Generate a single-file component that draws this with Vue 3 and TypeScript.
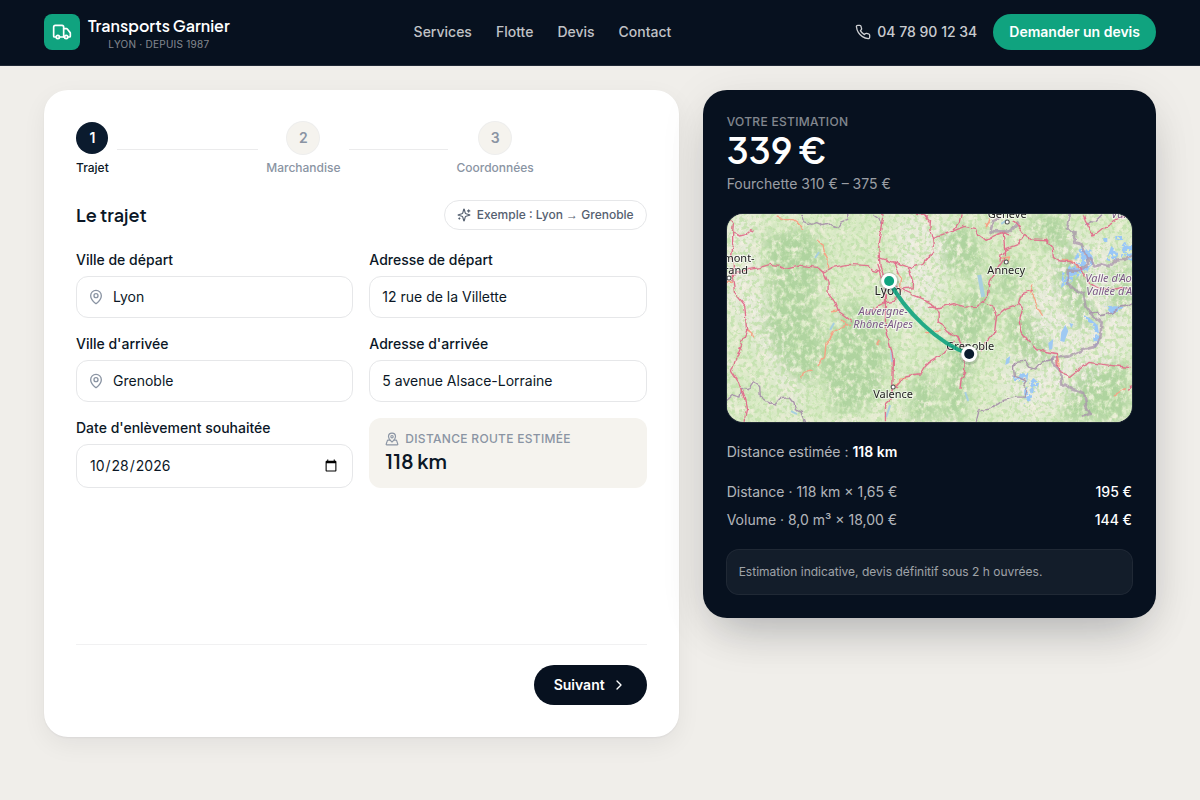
<script setup lang="ts">
import { ref } from 'vue'

interface Step { id: number; label: string }
interface Town { name: string; x: number; y: number; size: number }

const links: string[] = ['Services', 'Flotte', 'Devis', 'Contact']
const steps: Step[] = [
  { id: 1, label: 'Trajet' },
  { id: 2, label: 'Marchandise' },
  { id: 3, label: 'Coordonnées' },
]
const current = ref<number>(1)

const fromCity = ref('Lyon')
const fromAddress = ref('12 rue de la Villette')
const toCity = ref('Grenoble')
const toAddress = ref('5 avenue Alsace-Lorraine')
const pickupDate = ref('2026-10-28')

const lines = [
  { label: 'Distance · 118 km × 1,65 €', amount: '195 €' },
  { label: 'Volume · 8,0 m³ × 18,00 €', amount: '144 €' },
]

const towns: Town[] = [
  { name: 'Lyon', x: 161, y: 81, size: 12 },
  { name: 'Grenoble', x: 243, y: 136, size: 11 },
  { name: 'Annecy', x: 279, y: 60, size: 11 },
  { name: 'Valence', x: 166, y: 184, size: 11 },
  { name: 'Genève', x: 280, y: 4, size: 11 },
  { name: 'mont-', x: 12, y: 48, size: 11 },
  { name: 'rand', x: 9, y: 60, size: 11 },
]

function fillExample(): void {
  fromCity.value = 'Lyon'
  toCity.value = 'Grenoble'
}
function next(): void {
  current.value = Math.min(current.value + 1, steps.length)
}
</script>

<template>
  <div class="page">
    <header class="topbar">
      <div class="wrap topbar-inner">
        <a class="brand" href="#">
          <span class="brand-mark">
            <svg class="icon" width="20" height="20" viewBox="0 0 24 24" aria-hidden="true">
              <path d="M14 18V6a2 2 0 0 0-2-2H4a2 2 0 0 0-2 2v11a1 1 0 0 0 1 1h2" />
              <path d="M15 18H9" />
              <path d="M19 18h2a1 1 0 0 0 1-1v-3.65a1 1 0 0 0-.22-.624l-3.48-4.35A1 1 0 0 0 17.52 8H14" />
              <circle cx="17" cy="18" r="2" />
              <circle cx="7" cy="18" r="2" />
            </svg>
          </span>
          <span class="brand-text">
            <span class="brand-name">Transports Garnier</span>
            <span class="brand-sub">LYON · DEPUIS 1987</span>
          </span>
        </a>
        <nav class="nav">
          <a v-for="link in links" :key="link" href="#">{{ link }}</a>
        </nav>
        <div class="actions">
          <a class="phone" href="tel:+33478901234">
            <svg class="icon" width="16" height="16" viewBox="0 0 24 24" aria-hidden="true">
              <path d="M22 16.92v3a2 2 0 0 1-2.18 2 19.79 19.79 0 0 1-8.63-3.07 19.5 19.5 0 0 1-6-6 19.79 19.79 0 0 1-3.07-8.67A2 2 0 0 1 4.11 2h3a2 2 0 0 1 2 1.72 12.84 12.84 0 0 0 .7 2.81 2 2 0 0 1-.45 2.11L8.09 9.91a16 16 0 0 0 6 6l1.27-1.27a2 2 0 0 1 2.11-.45 12.84 12.84 0 0 0 2.81.7A2 2 0 0 1 22 16.92z" />
            </svg>
            04 78 90 12 34
          </a>
          <button type="button" class="cta">Demander un devis</button>
        </div>
      </div>
    </header>

    <main class="wrap layout">
      <form class="card" @submit.prevent="next">
        <ol class="steps">
          <li v-for="step in steps" :key="step.id" :class="{ active: step.id === current }">
            <div class="step">
              <span class="dot">{{ step.id }}</span>
              <span class="step-label">{{ step.label }}</span>
            </div>
            <span v-if="step.id < steps.length" class="rule"></span>
          </li>
        </ol>

        <section class="content">
          <div class="heading">
            <h2>Le trajet</h2>
            <button type="button" class="example" @click="fillExample">
              <svg class="icon" width="14" height="14" viewBox="0 0 24 24" aria-hidden="true">
                <path d="M9.937 15.5A2 2 0 0 0 8.5 14.063l-6.135-1.582a.5.5 0 0 1 0-.962L8.5 9.936A2 2 0 0 0 9.937 8.5l1.582-6.135a.5.5 0 0 1 .963 0L14.063 8.5A2 2 0 0 0 15.5 9.937l6.135 1.581a.5.5 0 0 1 0 .964L15.5 14.063a2 2 0 0 0-1.437 1.437l-1.582 6.135a.5.5 0 0 1-.963 0z" />
                <path d="M20 3v4M22 5h-4M4 17v2M5 18H3" />
              </svg>
              <span>Exemple : Lyon <span class="arrow">→</span> Grenoble</span>
            </button>
          </div>

          <div class="fields">
            <div class="field">
              <label for="from-city">Ville de départ</label>
              <div class="control with-icon">
                <svg class="icon" width="16" height="16" viewBox="0 0 24 24" aria-hidden="true">
                  <path d="M20 10c0 4.993-5.539 10.193-7.399 11.799a1 1 0 0 1-1.202 0C9.539 20.193 4 14.993 4 10a8 8 0 0 1 16 0" />
                  <circle cx="12" cy="10" r="3" />
                </svg>
                <input id="from-city" v-model="fromCity" type="text" />
              </div>
            </div>
            <div class="field">
              <label for="from-address">Adresse de départ</label>
              <div class="control"><input id="from-address" v-model="fromAddress" type="text" /></div>
            </div>
            <div class="field">
              <label for="to-city">Ville d'arrivée</label>
              <div class="control with-icon">
                <svg class="icon" width="16" height="16" viewBox="0 0 24 24" aria-hidden="true">
                  <path d="M20 10c0 4.993-5.539 10.193-7.399 11.799a1 1 0 0 1-1.202 0C9.539 20.193 4 14.993 4 10a8 8 0 0 1 16 0" />
                  <circle cx="12" cy="10" r="3" />
                </svg>
                <input id="to-city" v-model="toCity" type="text" />
              </div>
            </div>
            <div class="field">
              <label for="to-address">Adresse d'arrivée</label>
              <div class="control"><input id="to-address" v-model="toAddress" type="text" /></div>
            </div>
            <div class="field">
              <label for="pickup">Date d'enlèvement souhaitée</label>
              <div class="control date"><input id="pickup" v-model="pickupDate" type="date" /></div>
            </div>
            <div class="distance">
              <div class="distance-label">
                <svg class="icon" width="14" height="14" viewBox="0 0 24 24" aria-hidden="true">
                  <path d="M18 8c0 3.613-3.869 7.429-5.393 8.795a1 1 0 0 1-1.214 0C9.87 15.429 6 11.613 6 8a6 6 0 0 1 12 0" />
                  <circle cx="12" cy="8" r="2" />
                  <path d="M8.714 14h-3.71a1 1 0 0 0-.948.683l-2.004 6A1 1 0 0 0 3 22h18a1 1 0 0 0 .948-1.316l-2-6a1 1 0 0 0-.949-.684h-3.712" />
                </svg>
                DISTANCE ROUTE ESTIMÉE
              </div>
              <div class="distance-value">118 km</div>
            </div>
          </div>
        </section>

        <footer class="card-footer">
          <button type="submit" class="next">
            Suivant
            <svg class="icon" width="16" height="16" viewBox="0 0 24 24" aria-hidden="true"><path d="m9 18 6-6-6-6" /></svg>
          </button>
        </footer>
      </form>

      <aside class="summary">
        <div class="eyebrow">VOTRE ESTIMATION</div>
        <div class="total">339 €</div>
        <div class="range">Fourchette 310 € – 375 €</div>

        <svg class="map" viewBox="0 0 405 208" preserveAspectRatio="xMidYMid slice" role="img" aria-label="Lyon – Grenoble">
          <defs>
            <filter id="woods" x="0" y="0" width="100%" height="100%" color-interpolation-filters="sRGB">
              <feGaussianBlur in="SourceGraphic" stdDeviation="6" result="zones" />
              <feTurbulence type="fractalNoise" baseFrequency="0.2 0.15" numOctaves="5" seed="8" />
              <feColorMatrix type="matrix" values="0 0 0 0 0.67  0 0 0 0 0.82  0 0 0 0 0.61  3.6 0 0 0 -1.1" />
              <feComposite in2="zones" operator="in" />
            </filter>
            <filter id="speckle" x="0" y="0" width="100%" height="100%" color-interpolation-filters="sRGB">
              <feTurbulence type="fractalNoise" baseFrequency="0.24" numOctaves="5" seed="3" />
              <feColorMatrix type="matrix" values="0 0 0 0 0.77  0 0 0 0 0.89  0 0 0 0 0.68  6 0 0 0 -2.9" />
            </filter>
            <filter id="fields" x="0" y="0" width="100%" height="100%" color-interpolation-filters="sRGB">
              <feTurbulence type="fractalNoise" baseFrequency="0.07" numOctaves="5" seed="21" />
              <feColorMatrix type="matrix" values="0 0 0 0 0.95  0 0 0 0 0.94  0 0 0 0 0.87  0 5 0 0 -2.4" />
            </filter>
            <filter id="ice" x="-5%" y="-5%" width="110%" height="110%" color-interpolation-filters="sRGB">
              <feTurbulence type="fractalNoise" baseFrequency="0.22" numOctaves="3" seed="5" />
              <feColorMatrix type="matrix" values="0 0 0 0 0.6  0 0 0 0 0.78  0 0 0 0 0.97  12 0 0 0 -5.2" />
              <feComposite in2="SourceAlpha" operator="in" />
            </filter>
            <filter id="meander" x="-5%" y="-5%" width="110%" height="110%">
              <feTurbulence type="fractalNoise" baseFrequency="0.12" numOctaves="2" seed="4" result="wave" />
              <feDisplacementMap in="SourceGraphic" in2="wave" scale="5" xChannelSelector="R" yChannelSelector="G" />
            </filter>
            <filter id="soft" x="-20%" y="-20%" width="140%" height="140%"><feGaussianBlur stdDeviation="9" /></filter>
          </defs>

          <rect width="405" height="208" fill="#dfedcb" />
          <g fill="#f2efe6" filter="url(#soft)">
            <path d="M0 0h24l8 60 14 60 30 50-10 38-20-50L0 90zM170 0h50l6 40-18 60-40 6z" />
            <path d="M300 84l40-64 50 10 15 40v60l-40 50-70 28-30-50 30-20z" />
          </g>
          <rect width="405" height="208" filter="url(#fields)" opacity=".75" />
          <rect width="405" height="208" filter="url(#speckle)" opacity=".8" />
          <g filter="url(#woods)">
            <rect width="405" height="208" fill="#000" fill-opacity=".16" />
            <path fill-opacity=".9" d="M36 22l44-8 22 30-14 30 8 60-12 40-26-18-22-40 8-40zM92 150l30-66 30 14 12 40-14 50-40 16zM212 20l26-12 20 30-6 26-34-8zM226 90l34-24 12 30-24 36-10 74h-24zM272 38l24 10-10 40-16-10zM280 92l26 10 20 40-18 12-28-26zM336 20l24 40 10 50-20 6-24-50zM352 156l50-10v62h-70zM186 152l24 16v40h-30zM300 0h36l6 30-30 6zM380 60l25-14v46l-20 8z" />
          </g>

          <g filter="url(#ice)">
            <path d="M344 50l10-18 10 4 2 14-10 8-12 10-10 6 1-16zM362 36l4 8-6 14-4-6zM379 46l5-14 6 6 7-10 8 3v16l-12-4-8 5zM377 92l8 0 12 1-12 8zM354 100l8 4 8 7-2 6zM366 122l4-12 3 16-7 10zM285 160l16-1-1 9-13-1zM297 176l9-12 6 5-8 17-7 4zM376 24h4v4h-4zM388 22h8v4h-8z" />
          </g>
          <g fill="#9fc9f3">
            <path d="M334 118l4-7 3 6-4 11-4-1zM321 129l5-4-1 10-3 1zM279 145l4-3-1 7-4 2zM342 109l4 1-2 4zM289 163l8-1-2 4zM302 176l4-4-2 8z" />
          </g>
          <g fill="none" stroke="#a8cfdf" stroke-width="2">
            <path d="M252 61l4 22" stroke-width="4" />
            <path d="M159 203l4-12M165 148l-1-12M64 197l6 3M103 116l4-7M280 6l-6 4M238 178l3 9M88 44l4-6" />
          </g>

          <g filter="url(#meander)">
            <g transform="matrix(.3333 0 0 .3333 -7 -9)" class="borders">
              <path d="M245 27l8 23 22 8 15-5 19 9 20-5 23 11 10-17 21-8V24M460 27l16 12 10 20M20 586l18-16 22 6 5-26 20 4 16-22 18 12 2 32 20 14 23 10 16-20 30-2 12 14 4 22 18 8 14 36" />
            </g>
            <g transform="matrix(.3333 0 0 .3333 198 -9)" class="borders">
              <path d="M153 650l8-32 32-6 22-12 20-14 38-10 24 0 8-20-10-12 10-16-20-10-18-4-2-28 8-14 28-4 12 18 18 6 20-22 34-8M493 328l24-10 6 14 36-8 22-16 24-6 18-10M480 60l14-10 16 2 20-20" />
              <path class="frontier" d="M435 24l-10 46 26 14-4 28 22 6 14 34 6 26-28 20-34-2 2 42 20 16 24 12 8 40 22 26 26 20-4 48-20 26-38 10-32 18-50 4-6 10 28 32 4 36 30 16 36 12 6 40 12 22-28 10M490 160l20 24 20-6 22 6 14-16 34-4 20-12M280 50l-28 30-56-2 8-30 22-12" />
            </g>

            <g transform="matrix(.3333 0 0 .3333 -7 -9)" class="roads">
              <path class="minor" d="M170 36l26 8 24 0 20 14 8 18M292 105l12 8 6 24 14 26-2 28M380 360l-36 18-26 36-4 42-18 24M278 495l-26 4-10 22M78 376l14 8 12 14M330 320l26-2M516 550l20-14 4-14 22-2M470 420l8-16M530 200l14 20-4 40M366 340l8 18 18 0M20 232h18" />
              <path d="M30 44l10 12-2 24 20 10 20-4 14-12 12 4M38 80l0 40-6 30 8 24 0 46M38 222l8-18 38-10 36-6 34-10 26 4 16 8 40-10 30 4 30 4 16 14 30-16 42-8 60 4 16 14 20 6M310 198l14 34 0 30 16 20 14 36 20 14 22 18M38 222l6 40 30 38 6 80-24 60-22 58 22 34 18 52 6 30-8 36M492 28l-6 40-10 60 4 60 14 34 2 60 0 80 24 100-2 80-6 42-16 14 0 50M480 160l42 12 14 36M486 28l4 0M520 170l44 16 14 40-2 22-30 4M560 190l48-12 22-28M470 180l14 40M518 240l66 32 46 18M440 325l40-24 16-8M496 293l26-4 16-30M530 546l28-34 44-6 12-20 16-16M588 28l26 2 14 20" />
            </g>
            <g transform="matrix(.3333 0 0 .3333 198 -9)" class="roads">
              <path class="minor" d="M320 236l-6 24 14 20 10 30 14 22M228 160l28-4-4 12M180 60l14-8M0 380l50-2M394 446l8 36M410 160l34 10 16 18M566 570l20-10 16-10M196 40l-14 30" />
              <path d="M0 30l16 14-2 30 8 26 4 40-28 30M20 102l64-24 34-14 32 6 8 20 22 16 28-14 26-10 22 8M108 28l-6 24-20 26M266 48l32 40 18 14 46 2 18 20 4 30 20 14 30 2 26 10 12 22 20 30 24 14 16 10 60-8 20 2M298 88l-20 30-38 14-12 18-4 20M234 80l4 50 0 30-12 18-34 50-6 50-14 12-16 14-38 2-32-10-48 12-30-2M0 288l28 16 14 16 0 26 22 30 38 24 4 18M174 288l24 14 16 30-6 50-30 36-14 20M216 330l26-20 40-14 10-30 28-10M282 296l10 14-8 30 6 40 18 26 26 28 30 6 30 6 2 34 10 22 30 12 52-42 60 8 70 8M0 480l46-28 26-26 20-20M120 460l-2 40-10 20-4 34M474 28l6 20 24 44 36-28 46-28 36-6M606 556l16-18M96 396l18 30 4 34" />
            </g>
          </g>

          <g class="towns">
            <circle cx="279" cy="48" r="2" /><circle cx="280" cy="8" r="2" />
            <circle cx="166" cy="173" r="2" /><circle cx="2" cy="64" r="2" />
          </g>
          <g class="names">
            <text v-for="town in towns" :key="town.name" :x="town.x" :y="town.y" :font-size="town.size">{{ town.name }}</text>
            <g class="regions">
              <text x="156" y="101">Auvergne-</text>
              <text x="156" y="114">Rhône-Alpes</text>
              <text class="start" x="358" y="68">Valle d'Aosta /</text>
              <text class="start" x="359" y="81">Vallée d'Aoste</text>
              <text class="start" x="384" y="4">Valais</text>
            </g>
          </g>

          <path class="route" d="M162 67C177 96 211 130 242 140" />
          <circle cx="162" cy="68" r="10" fill="#07111f" opacity=".14" />
          <circle cx="242" cy="141" r="10" fill="#07111f" opacity=".14" />
          <circle cx="162" cy="67" r="8" fill="#fff" /><circle cx="162" cy="67" r="5" fill="#10a37f" />
          <circle cx="242" cy="140" r="8" fill="#fff" /><circle cx="242" cy="140" r="5" fill="#0b1b2e" />
        </svg>

        <p class="estimate">Distance estimée : <strong>118 km</strong></p>
        <dl class="lines">
          <div v-for="line in lines" :key="line.label">
            <dt>{{ line.label }}</dt>
            <dd>{{ line.amount }}</dd>
          </div>
        </dl>
        <p class="note">Estimation indicative, devis définitif sous 2 h ouvrées.</p>
      </aside>
    </main>
  </div>
</template>

<style>
body {
  margin: 0;
  background: #f0eeea;
}
</style>

<style scoped>
.page {
  min-height: 100vh;
  color: #0b1726;
  font-family: Inter, "Liberation Sans", sans-serif;
  font-size: 14px;
  line-height: 20px;
}
.page *,
.page *::before {
  box-sizing: border-box;
}
button,
input {
  font: inherit;
  color: inherit;
}
button {
  border: 0;
  cursor: pointer;
}
a {
  color: inherit;
  text-decoration: none;
}
.icon {
  flex: none;
  fill: none;
  stroke: currentColor;
  stroke-width: 2;
  stroke-linecap: round;
  stroke-linejoin: round;
}
.wrap {
  max-width: 1152px;
  margin: 0 auto;
  padding: 0 20px;
  box-sizing: border-box;
}
.topbar {
  padding-bottom: 1px;
  background: #07111f;
  border-bottom: 1px solid #1f2835;
}
.topbar-inner {
  min-height: 64px;
  display: flex;
  align-items: center;
  justify-content: space-between;
}
.brand {
  display: flex;
  align-items: center;
  gap: 8px;
}
.brand-mark {
  display: grid;
  place-items: center;
  width: 36px;
  height: 36px;
  border-radius: 8px;
  background: #10a37f;
  color: #fff;
}
.brand-text {
  display: flex;
  flex-direction: column;
  align-items: center;
  padding-top: 3px;
}
.brand-name,
.total,
.distance-value,
h2 {
  font-family: "Plus Jakarta Sans", Inter, "Liberation Sans", sans-serif;
  font-weight: 600;
}
.brand-name {
  color: #fff;
  font-size: 16px;
  line-height: 20px;
}
.brand-sub {
  color: rgba(255, 255, 255, 0.5);
  font-size: 10px;
  line-height: 16px;
  letter-spacing: 0.25px;
}
.nav {
  display: flex;
  gap: 24px;
  color: rgba(255, 255, 255, 0.75);
  font-weight: 500;
}
.actions {
  display: flex;
  align-items: center;
  gap: 16px;
}
.phone {
  display: flex;
  align-items: center;
  gap: 6px;
  color: rgba(255, 255, 255, 0.8);
  font-weight: 500;
}
.cta {
  height: 36px;
  padding: 0 16px;
  border-radius: 18px;
  background: #10a37f;
  color: #fff;
  font-weight: 600;
}
.layout {
  display: grid;
  grid-template-columns: 1.4fr 1fr;
  align-items: start;
  gap: 24px;
  padding-top: 24px;
  padding-bottom: 24px;
}
.card {
  padding: 32px;
  border-radius: 24px;
  background: #fff;
  box-shadow: 0 1px 2px rgba(7, 17, 31, 0.05), 0 8px 24px rgba(7, 17, 31, 0.06);
}
.steps {
  display: flex;
  margin: 0 0 24px;
  padding: 0;
  list-style: none;
}
.steps li {
  flex: 1;
  display: flex;
  align-items: center;
}
.step {
  display: flex;
  flex-direction: column;
  align-items: center;
  gap: 6px;
  color: #8a94a3;
  font-weight: 500;
}
.dot {
  display: grid;
  place-items: center;
  width: 32px;
  height: 32px;
  border-radius: 50%;
  background: #f5f3ee;
  box-shadow: 0 0 0 1px #eeeeed;
  font-weight: 600;
}
.step-label {
  font-size: 12px;
  line-height: 16px;
}
.active .dot {
  background: #0b1b2e;
  box-shadow: none;
  color: #fff;
}
.active .step-label {
  color: #0b1726;
}
.rule {
  flex: 1;
  height: 1px;
  margin: 0 8px;
  background: #ebebec;
}
.content {
  min-height: 420px;
}
.heading {
  display: flex;
  align-items: center;
  justify-content: space-between;
  margin-bottom: 20px;
}
h2 {
  margin: 0;
  font-size: 18px;
  line-height: 28px;
}
.example {
  display: flex;
  align-items: center;
  gap: 6px;
  height: 30px;
  padding: 0 12px;
  border: 1px solid #e6e7e9;
  border-radius: 15px;
  background: #fff;
  color: #556070;
  font-size: 12px;
  font-weight: 500;
}
.arrow {
  font-family: "Liberation Sans", sans-serif;
}
.fields {
  display: grid;
  grid-template-columns: 1fr 1fr;
  gap: 16px;
}
.field {
  display: flex;
  flex-direction: column;
  gap: 6px;
  min-width: 0;
}
.field label {
  font-weight: 500;
}
.control {
  display: flex;
  align-items: center;
  gap: 9px;
  height: 42px;
  padding: 0 12px;
  border: 1px solid #e6e7e9;
  border-radius: 12px;
  background: #fff;
}
.control.with-icon {
  padding-left: 11px;
}
.control .icon {
  color: #8a94a3;
}
.control input {
  flex: 1;
  min-width: 0;
  padding: 0;
  border: 0;
  outline: 0;
  background: transparent;
}
.control.date {
  height: 44px;
}
.distance {
  padding: 12px 16px;
  border-radius: 12px;
  background: #f5f3ee;
}
.distance-label {
  display: flex;
  align-items: center;
  gap: 6px;
  color: #8a94a3;
  font-size: 12px;
  line-height: 18px;
  font-weight: 500;
  letter-spacing: 0.3px;
}
.distance-value {
  font-size: 20px;
  line-height: 26px;
}
.card-footer {
  display: flex;
  justify-content: flex-end;
  margin-top: 24px;
  padding-top: 20px;
  border-top: 1px solid #f1f1f2;
}
.next {
  display: flex;
  align-items: center;
  gap: 6px;
  height: 40px;
  padding: 0 20px;
  border-radius: 20px;
  background: #07111f;
  color: #fff;
  font-weight: 600;
}
.summary {
  padding: 24px;
  border-radius: 24px;
  background: #07111f;
  color: rgba(255, 255, 255, 0.7);
  box-shadow: 0 24px 48px -16px rgba(7, 17, 31, 0.24), 0 8px 48px rgba(7, 17, 31, 0.08);
}
.eyebrow {
  color: rgba(255, 255, 255, 0.5);
  font-size: 12px;
  line-height: 16px;
  font-weight: 500;
  letter-spacing: 0.3px;
}
.total {
  color: #fff;
  font-size: 36px;
  line-height: 40px;
}
.range {
  margin-top: 4px;
  color: rgba(255, 255, 255, 0.6);
}
.map {
  display: block;
  width: 100%;
  height: 208px;
  margin: 20px 0;
  border-radius: 16px;
  box-shadow: 0 0 0 1px rgba(255, 255, 255, 0.1);
}
.roads path {
  fill: none;
  stroke: #e0708c;
  stroke-width: 4;
  stroke-linejoin: round;
}
.roads .minor {
  stroke: #f6a184;
}
.borders path {
  fill: none;
  stroke: #a893ab;
  stroke-width: 4;
  stroke-linejoin: round;
}
.borders .frontier {
  stroke-width: 8;
  opacity: 0.75;
}
.towns circle {
  fill: #fff;
  stroke: #555;
  stroke-width: 1;
}
.names text {
  font-family: "Noto Sans", sans-serif;
  text-anchor: middle;
  fill: #222;
  stroke: rgba(255, 255, 255, 0.6);
  stroke-width: 2;
  paint-order: stroke;
}
.names .regions text {
  font-size: 11px;
  font-style: italic;
  fill: #7c5a86;
}
.names .regions .start {
  text-anchor: start;
}
.route {
  fill: none;
  stroke: #10a37f;
  stroke-width: 4;
  stroke-linecap: round;
  opacity: 0.9;
}
.estimate {
  margin: 0 0 20px;
}
.estimate strong {
  color: #fff;
  font-weight: 600;
}
.lines {
  display: flex;
  flex-direction: column;
  gap: 8px;
  margin: 0 0 20px;
}
.lines div {
  display: flex;
  justify-content: space-between;
}
.lines dd {
  margin: 0;
  color: #fff;
  font-weight: 500;
}
.note {
  margin: 0;
  padding: 12px;
  border-radius: 12px;
  background: rgba(255, 255, 255, 0.05);
  box-shadow: 0 0 0 1px rgba(255, 255, 255, 0.1);
  color: rgba(255, 255, 255, 0.6);
  font-size: 12px;
}
@media (max-width: 860px) {
  .layout {
    grid-template-columns: 1fr;
  }
  .nav {
    display: none;
  }
}
</style>
